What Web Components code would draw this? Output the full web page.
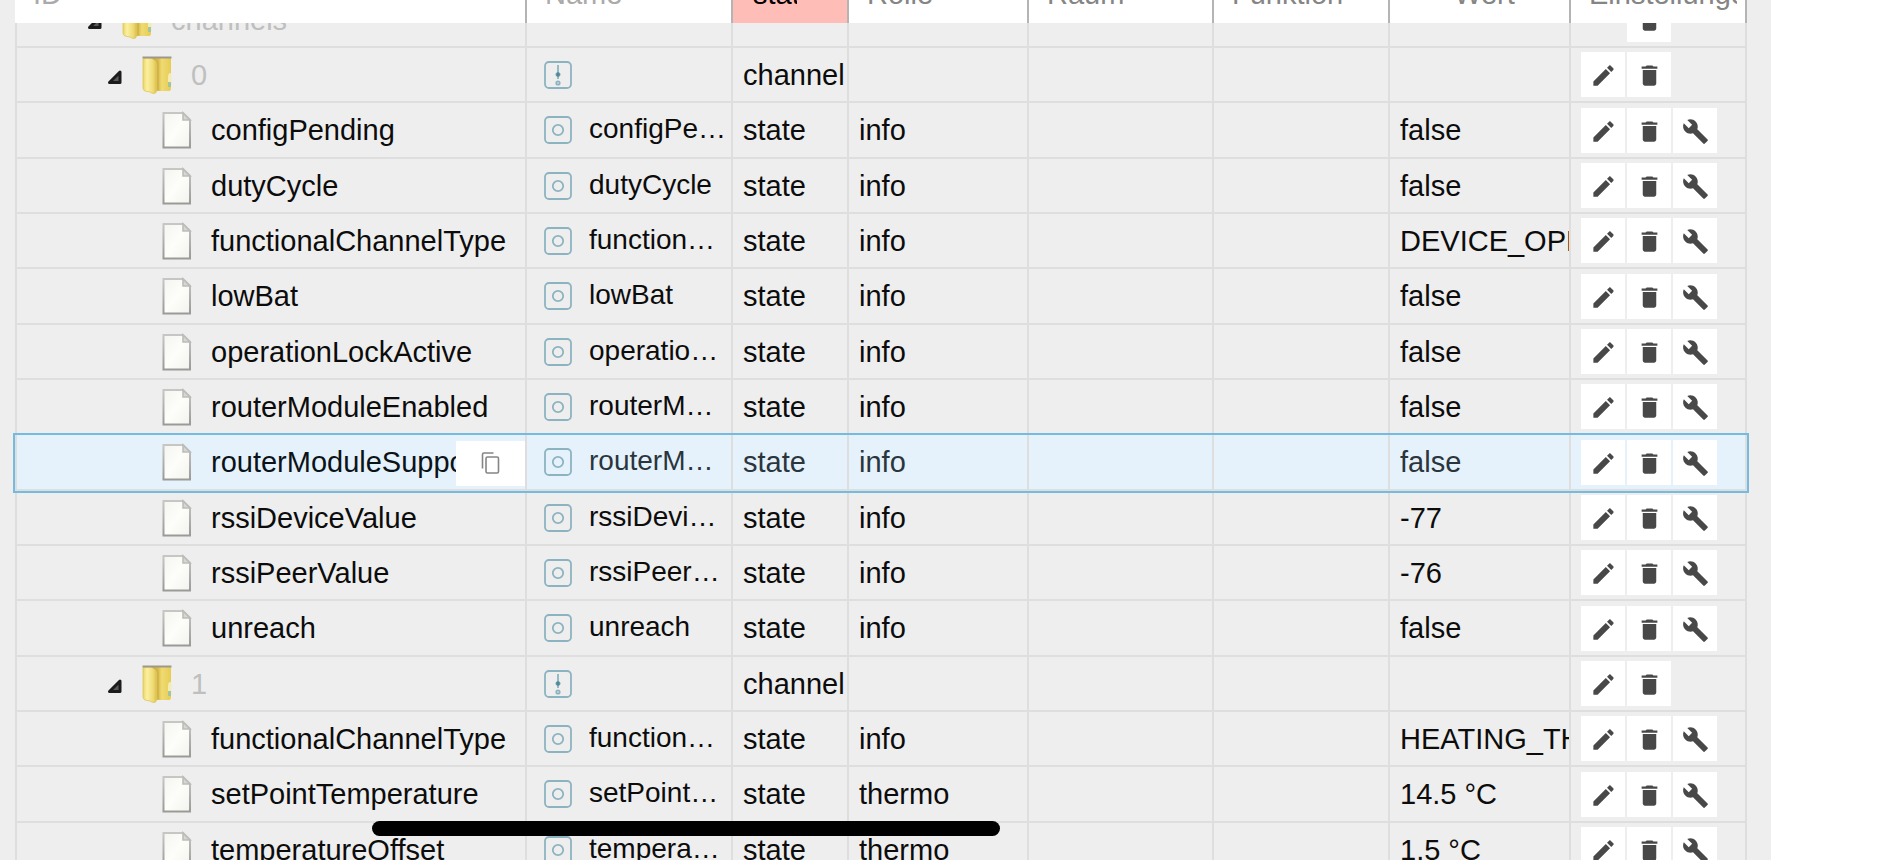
<!DOCTYPE html>
<html lang="de">
<head>
<meta charset="utf-8">
<title>Objekte</title>
<style>
  body { margin: 0; background: #fff; color: #0c0c0c; font: 29px/34px "Liberation Sans", Arial, sans-serif; overflow: hidden; }
</style>
</head>
<body>
<object-browser></object-browser>
<home-indicator></home-indicator>
<script>
const define = (name, html, setup) => {
  const template = document.createElement('template');
  template.innerHTML = html;
  customElements.define(name, class extends HTMLElement {
    connectedCallback() {
      if (this.shadowRoot) return;
      this.attachShadow({ mode: 'open' }).append(template.content.cloneNode(true));
      if (setup) setup(this, this.shadowRoot);
    }
  });
};

define('home-indicator', `<style>
  :host { display: block; position: fixed; left: 372px; bottom: 24px; width: 33vw; height: 15px; border-radius: 8px; background: #000; z-index: 2; }
</style>`);

/* Icon of a tree entry: open folder or document */
const treeIcons = {
  folder: `<svg width="30" height="38" viewBox="0 0 30 38" aria-hidden="true">
    <defs><linearGradient id="a"><stop offset="0" stop-color="#e9d462"/><stop offset=".3" stop-color="#fbf0a2"/><stop offset=".75" stop-color="#efdb74"/><stop offset="1" stop-color="#dcc04e"/></linearGradient>
    <linearGradient id="b"><stop offset="0" stop-color="#cfae42"/><stop offset=".45" stop-color="#d9bc4c"/><stop offset=".6" stop-color="#f0db72"/><stop offset="1" stop-color="#e6cc54"/></linearGradient></defs>
    <path d="M6 2H29V32Q29 35 27 35H12Z" fill="url(#b)"/>
    <path d="M1 3Q1 2 3 2H9Q14.500 4 14.500 8V34Q14.500 37.500 12 37.500Q10 37.500 8 36L3 35Q1 34 1 32Z" fill="url(#a)" stroke="#dcc65c" stroke-width=".8"/>
    <path d="M11 2.500Q16 4 16 7V34" fill="none" stroke="#c9a846" stroke-width=".8"/>
    <path d="M.5 1.500H29.500" stroke="#9c988a" stroke-width="2"/>
    <path d="M26 22q0-5 2-5 1.500 0 1.500 4v9q-3.500 2-3.500-2z" fill="#f3ecb8"/><path d="M26 26h3v5h-3z" fill="#a3c49c"/></svg>`,
  file: `<svg width="30" height="38" viewBox="0 0 30 38" aria-hidden="true">
    <defs><linearGradient id="p" x1="0" y1="0" x2="1" y2="1"><stop offset="0" stop-color="#f4f5f0"/><stop offset=".5" stop-color="#fdfefa"/><stop offset="1" stop-color="#f2f3ee"/></linearGradient>
    <linearGradient id="s" x1="0" y1="0" x2="0" y2="1"><stop offset="0" stop-color="#c6c6c4"/><stop offset="1" stop-color="#9a9a98"/></linearGradient></defs>
    <path d="M1.500 2H21L28 9V36.500H1.500Z" fill="url(#p)" stroke="url(#s)" stroke-width="2"/>
    <path d="M21 2V9H28Z" fill="#d6d7d3" stroke="#bcbdb9" stroke-width="1.600"/></svg>`
};
define('tree-label', `<style>
  :host { display: flex; align-items: center; height: 100%; white-space: nowrap; position: relative; overflow: hidden; }
  .icon { width: 30px; height: 38px; flex: none; margin-right: 19px; }
  :host([kind="folder"]) .text { color: #bfbfbf; }
  button { border: 0; padding: 0; background: none; flex: none; }
  .toggle { width: 14px; height: 14px; margin: 5px 20px 0 0; }
  .copy { position: absolute; right: 0; top: 5px; width: 69px; height: 45px; background: #fff; display: flex; align-items: center; justify-content: center; }
  svg { display: block; }
</style><span class="icon"></span><span class="text"><slot></slot></span>`, (host, root) => {
  const kind = host.getAttribute('kind');
  const level = Number(host.getAttribute('level'));
  const icon = root.querySelector('.icon');
  icon.innerHTML = treeIcons[kind];
  if (kind === 'folder') {
    host.style.paddingLeft = (level * 20 + 31) + 'px';
    icon.insertAdjacentHTML('beforebegin', `<button class="toggle" aria-label="Zuklappen"><svg width="14" height="14" viewBox="0 0 14 14"><path d="M12 2V12.500H1.500Z" fill="#5a5a5a" stroke="#1c1c1c" stroke-width="3" stroke-linejoin="round"/></svg></button>`);
  } else host.style.paddingLeft = (level * 20 + 65) + 'px';
  if (host.hasAttribute('copy'))
    root.append(Object.assign(document.createElement('button'), { className: 'copy', ariaLabel: 'Kopieren',
      innerHTML: `<svg width="20" height="24" viewBox="0 0 20 24" fill="none" stroke="#858585" stroke-width="1.600"><rect x="5" y="6" width="12.500" height="16" rx="1.500"/><path d="M1.500 17.500V3.500Q1.500 2 3 2H12.500"/></svg>` }));
});

define('object-name', `<style>
  :host { display: flex; align-items: center; height: 100%; padding-left: 17px; gap: 17px; font-size: 28px; }
  svg { flex: none; display: block; }
  .text { flex: 1; overflow: hidden; white-space: nowrap; padding-bottom: 2px; }
</style><svg width="28" height="28" viewBox="0 0 28 28" fill="none" stroke="#8cb3c0" stroke-width="1.800" aria-hidden="true"></svg><span class="text"><slot></slot></span>`, (host, root) => {
  root.querySelector('svg').innerHTML = '<rect x="1" y="1" width="26" height="26" rx="4"/>' + (host.getAttribute('kind') === 'channel'
    ? '<path d="M14 4V18"/><circle cx="14" cy="13.500" r="2" fill="#4f8799" stroke="#6797a8" stroke-width="1"/><circle cx="14" cy="22" r="1.700"/>'
    : '<circle cx="14" cy="14" r="5.200"/>');
});

const actionPaths = {
  edit: ['Bearbeiten', 'M3 17.250V21h3.750L17.810 9.940l-3.750-3.750L3 17.250zM20.710 7.040c.39-.39.39-1.020 0-1.410l-2.340-2.340c-.39-.39-1.020-.39-1.410 0l-1.830 1.830 3.750 3.750 1.830-1.830z'],
  delete: ['Löschen', 'M6 19c0 1.100.9 2 2 2h8c1.100 0 2-.9 2-2V7H6v12zM19 4h-3.500l-1-1h-5l-1 1H5v2h14V4z'],
  build: ['Konfigurieren', 'M22.700 19l-9.100-9.100c.9-2.300.4-5-1.500-6.900-2-2-5-2.400-7.400-1.300L9 6 6 9 1.600 4.700C.4 7.100.9 10.100 2.900 12.100c1.900 1.900 4.600 2.400 6.900 1.500l9.100 9.100c.4.4 1 .4 1.400 0l2.300-2.300c.5-.4.5-1.100.1-1.400z']
};
define('row-action', `<style>
  :host { display: block; width: 44px; height: 45px; }
  button { width: 100%; height: 100%; border: 0; padding: 2px 0 0; background: #fff; display: flex; align-items: center; justify-content: center; }
</style><button><svg width="27" height="27" viewBox="0 0 24 24" fill="#484848" aria-hidden="true"><path/></svg></button>`, (host, root) => {
  const [label, d] = actionPaths[host.getAttribute('type')];
  root.querySelector('button').setAttribute('aria-label', label);
  root.querySelector('path').setAttribute('d', d);
});

const state = (id, name, role, value, more) => ({ id, name, type: 'state', role, value, ...more });
const rows = [
  { id: 'channels', level: 2, clipped: true },
  { id: '0', level: 3, type: 'channel' },
  state('configPending', 'configPe…', 'info', 'false'),
  state('dutyCycle', 'dutyCycle', 'info', 'false'),
  state('functionalChannelType', 'function…', 'info', 'DEVICE_OPE'),
  state('lowBat', 'lowBat', 'info', 'false'),
  state('operationLockActive', 'operatio…', 'info', 'false'),
  state('routerModuleEnabled', 'routerM…', 'info', 'false'),
  state('routerModuleSuppo', 'routerM…', 'info', 'false', { selected: true }),
  state('rssiDeviceValue', 'rssiDevi…', 'info', '-77'),
  state('rssiPeerValue', 'rssiPeer…', 'info', '-76'),
  state('unreach', 'unreach', 'info', 'false'),
  { id: '1', level: 3, type: 'channel' },
  state('functionalChannelType', 'function…', 'info', 'HEATING_TH'),
  state('setPointTemperature', 'setPoint…', 'thermo', '14.5 °C'),
  state('temperatureOffset', 'tempera…', 'thermo', '1.5 °C')
];
const cell = (content = '', cls = '') => `<td class="${cls}"><div class="view"><div class="cell">${content}</div></div></td>`;
const renderRow = r => {
  const leaf = r.type === 'state';
  const label = `<tree-label kind="${leaf ? 'file' : 'folder'}" level="${leaf ? 4 : r.level}"${r.selected ? ' copy' : ''}>${r.id}</tree-label>`;
  const name = r.type ? `<object-name kind="${r.type}">${r.name || ''}</object-name>` : '';
  const actions = (r.clipped ? '<span></span>' : '<row-action type="edit"></row-action>')
    + '<row-action type="delete"></row-action>' + (leaf ? '<row-action type="build"></row-action>' : '');
  return `<tr class="${r.selected ? 'selected' : ''}${r.clipped ? 'clipped' : ''}">`
    + cell(label, 'id') + cell(name) + cell(r.type, 'text') + cell(r.role, 'text') + cell() + cell()
    + cell(r.value, 'text') + cell(`<div class="actions">${actions}</div>`) + '</tr>';
};

define('object-browser', `<style>
  :host { display: block; box-sizing: border-box; width: calc(100% - 132px); height: 100vh; padding: 0 24px 0 15px; background: #eee; overflow: hidden; }
  table { width: 100%; table-layout: fixed; border-collapse: separate; border-spacing: 0; }
  .name { width: 206px; } .type { width: 116px; } .role { width: 180px; } .room { width: 185px; }
  .func, .settings { width: 176px; } .value { width: 181px; }
  th { padding: 0; background: #fff; border-right: 2px solid #b4b4b4; font-weight: normal; text-align: left; color: #858585; }
  th > div { display: flex; align-items: flex-end; height: 23px; overflow: hidden; box-sizing: border-box; padding: 0 8px 12px 18px; }
  th.filter { background: #ffbdb8; color: #000; }
  th.filter > div { padding: 0 50px 12px 20px; }
  th span { flex: 1; min-width: 0; overflow: hidden; white-space: nowrap; }
  th span.mid { text-align: center; }
  input, select { appearance: none; border: 0; border-radius: 0; padding: 0; margin: 0; width: 100%; height: 34px; flex: none; background: none; font: inherit; color: inherit; outline: 0; }
  input::placeholder { color: #aaa; opacity: 1; }
  td { padding: 0; height: 53px; border-right: 2px solid #dedede; border-bottom: 2px solid #dedede; }
  td:first-child { border-left: 2px solid #dedede; }
  /* every third row takes the pixel left over by the row rhythm */
  tbody tr:nth-child(3n) td { height: 54px; }
  .cell { height: 53px; overflow: hidden; display: flex; align-items: center; white-space: nowrap; }
  .cell > * { flex: 1; min-width: 0; }
  .text .cell { padding-left: 10px; }
  .actions { display: grid; grid-template-columns: repeat(3, 44px); gap: 2px; padding-left: 10px; }
  .clipped td { height: 23px; }
  .clipped .view { height: 23px; overflow: hidden; display: flex; align-items: flex-end; }
  .clipped .cell { width: 100%; flex: none; }
  .selected { background: #e5f2fc; color: #2b353c; outline: 2px solid #74bbdf; }
  .selected .id { color: #0c1318; }
</style>
<table>
  <colgroup><col><col class="name"><col class="type"><col class="role"><col class="room"><col class="func"><col class="value"><col class="settings"></colgroup>
  <thead><tr>
    <th><div><input aria-label="ID" placeholder="ID"></div></th>
    <th><div><input aria-label="Name" placeholder="Name"></div></th>
    <th class="filter"><div><select aria-label="Typ"><option>state</option></select></div></th>
    <th><div><select aria-label="Rolle"><option>Rolle</option></select></div></th>
    <th><div><select aria-label="Raum"><option>Raum</option></select></div></th>
    <th><div><select aria-label="Funktion"><option>Funktion</option></select></div></th>
    <th><div><span class="mid">Wert</span></div></th>
    <th><div><span>Einstellungen</span></div></th>
  </tr></thead>
  <tbody></tbody>
</table>`, (host, root) => { root.querySelector('tbody').innerHTML = rows.map(renderRow).join(''); });
</script>
</body>
</html>
